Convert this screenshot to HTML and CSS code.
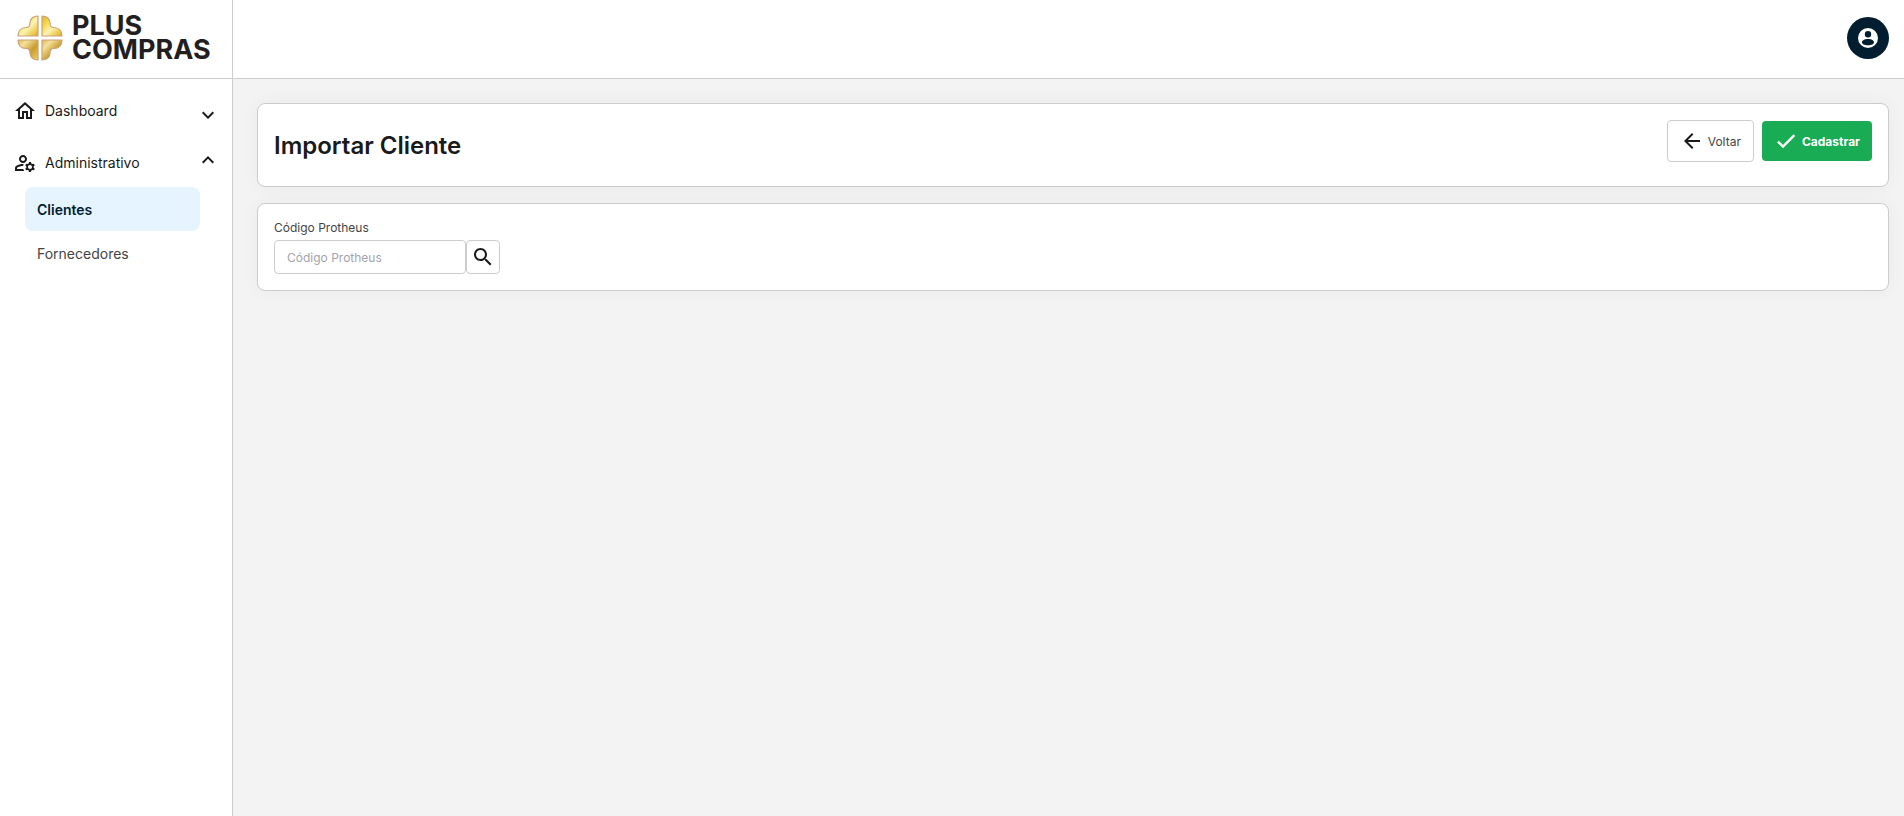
FILE: index.html
```html
<!DOCTYPE html>
<html lang="pt-BR">
<head>
  <meta charset="UTF-8">
  <meta name="viewport" content="width=device-width, initial-scale=1">
  <title>Importar Cliente</title>
  <link rel="stylesheet" href="styles.css">
</head>
<body>
  <div class="layout">
    <aside class="sidebar">
      <a class="logo" href="#">
        <svg class="logo-mark" viewBox="0 0 46 46" aria-hidden="true">
          <defs>
            <linearGradient id="gold" x1="0" y1="0" x2="1" y2="1">
              <stop offset="0" stop-color="#e3b52c" />
              <stop offset="0.3" stop-color="#f5d94f" />
              <stop offset="0.55" stop-color="#fdf3b4" />
              <stop offset="0.8" stop-color="#efcd55" />
              <stop offset="1" stop-color="#d3a637" />
            </linearGradient>
            <linearGradient id="gold-dark" x1="0" y1="0" x2="1" y2="1">
              <stop offset="0" stop-color="#dfba4e" />
              <stop offset="0.25" stop-color="#f3e09a" />
              <stop offset="0.6" stop-color="#c99c2e" />
              <stop offset="1" stop-color="#ecd06a" />
            </linearGradient>
          </defs>
          <g stroke="#c9a27a" stroke-width="1.2" stroke-linejoin="round">
            <path fill="url(#gold)" d="M21 1V21H1C1 16 4 12.500 9 12.500C12 12.500 13 11 13 8C13 4 16 1 21 1Z" />
            <path fill="url(#gold)" d="M25 1V21H45C45 16 42 12.500 37 12.500C34 12.500 33 11 33 8C33 4 30 1 25 1Z" />
            <path fill="url(#gold-dark)" d="M21 45V25H1C1 30 4 33.500 9 33.500C12 33.500 13 35 13 38C13 42 16 45 21 45Z" />
            <path fill="url(#gold-dark)" d="M25 45V25H45C45 30 42 33.500 37 33.500C34 33.500 33 35 33 38C33 42 30 45 25 45Z" />
          </g>
        </svg>
        <span class="logo-text">PLUS<br>COMPRAS</span>
      </a>

      <nav class="menu">
        <button class="menu-item" type="button" aria-expanded="false">
          <svg class="icon" viewBox="0 0 24 24" aria-hidden="true"><path d="M12 5.69l5 4.5V18h-2v-6H9v6H7v-7.81l5-4.5M12 3L2 12h3v8h6v-6h2v6h6v-8h3L12 3z" /></svg>
          <span class="menu-label">Dashboard</span>
          <svg class="icon chevron-down" viewBox="0 0 24 24" aria-hidden="true"><path d="M7.410 8.590L12 13.170l4.590-4.580L18 10l-6 6-6-6z" /></svg>
        </button>
        <button class="menu-item" type="button" aria-expanded="true">
          <svg class="icon" viewBox="0 0 24 24" aria-hidden="true"><path d="M4 18v-.65c0-.34.16-.66.41-.81C6.1 15.53 8.030 15 10 15c.03 0 .05 0 .08.01.1-.7.3-1.370.59-1.980-.22-.02-.44-.03-.67-.03-2.420 0-4.680.67-6.610 1.820-.88.52-1.390 1.500-1.390 2.530V20h9.260c-.42-.6-.75-1.280-.97-2H4zM10 12c2.210 0 4-1.790 4-4s-1.790-4-4-4-4 1.790-4 4 1.790 4 4 4zm0-6c1.100 0 2 .9 2 2s-.9 2-2 2-2-.9-2-2 .9-2 2-2zM20.750 16c0-.22-.03-.42-.06-.63l1.140-1.010-1-1.730-1.450.49c-.32-.27-.68-.48-1.080-.63L18 11h-2l-.3 1.490c-.4.15-.76.36-1.080.63l-1.450-.49-1 1.730 1.140 1.010c-.03.21-.06.41-.06.63s.03.42.06.63l-1.140 1.010 1 1.730 1.450-.49c.32.27.68.48 1.080.63L16 21h2l.3-1.490c.4-.15.76-.36 1.080-.63l1.450.49 1-1.730-1.140-1.010c.03-.21.06-.41.06-.63zM17 18c-1.100 0-2-.9-2-2s.9-2 2-2 2 .9 2 2-.9 2-2 2z" /></svg>
          <span class="menu-label">Administrativo</span>
          <svg class="icon chevron-up" viewBox="0 0 24 24" aria-hidden="true"><path d="M12 8l-6 6 1.410 1.410L12 10.830l4.590 4.580L18 14z" /></svg>
        </button>
        <div class="submenu">
          <a class="submenu-item active" href="#">Clientes</a>
          <a class="submenu-item" href="#">Fornecedores</a>
        </div>
      </nav>
    </aside>

    <div class="page">
      <header class="topbar">
        <button class="avatar" type="button" aria-label="Conta">
          <svg class="icon" viewBox="0 0 24 24" aria-hidden="true"><path fill-rule="evenodd" d="M12 2a10 10 0 1 0 0 20 10 10 0 1 0 0-20zM12 5a3.200 3.200 0 1 1 0 6.400A3.200 3.200 0 1 1 12 5zM12 13c3.600 0 6 1.500 6 3.200S15.600 19.200 12 19.200 6 17.900 6 16.200 8.400 13 12 13z" /></svg>
        </button>
      </header>

      <main class="content">
        <section class="card card-header">
          <h1>Importar Cliente</h1>
          <div class="actions">
            <button class="button button-back" type="button">
              <svg class="icon" viewBox="0 0 24 24" aria-hidden="true"><path d="M20 11H7.830l5.590-5.590L12 4l-8 8 8 8 1.410-1.410L7.830 13H20v-2z" /></svg>
              Voltar
            </button>
            <button class="button button-save" type="submit" form="import-form">
              <svg class="icon" viewBox="0 0 24 24" aria-hidden="true"><path d="M9 16.170L4.830 12l-1.420 1.410L9 19 21 7l-1.410-1.410z" /></svg>
              Cadastrar
            </button>
          </div>
        </section>

        <form class="card" id="import-form">
          <label for="codigo">Código Protheus</label>
          <div class="search-group">
            <input type="text" id="codigo" placeholder="Código Protheus">
            <button class="search-button" type="button" aria-label="Buscar">
              <svg class="icon" viewBox="0 0 24 24" aria-hidden="true"><path d="M15.500 14h-.79l-.28-.27C15.410 12.590 16 11.110 16 9.500 16 5.910 13.090 3 9.500 3S3 5.910 3 9.500 5.910 16 9.500 16c1.610 0 3.090-.59 4.230-1.570l.27.28v.79l5 4.990L20.490 19l-4.990-5zm-6 0C7.010 14 5 11.990 5 9.500S7.010 5 9.500 5 14 7.010 14 9.500 11.990 14 9.500 14z" /></svg>
            </button>
          </div>
        </form>
      </main>
    </div>
  </div>
</body>
</html>
```

FILE: styles.css
```css
* {
  box-sizing: border-box;
}

body {
  margin: 0;
  font-family: Inter, "Liberation Sans", sans-serif;
  font-size: 14px;
  color: #1a1a1a;
  background-color: #f3f3f3;
}

button,
input {
  font-family: inherit;
  color: inherit;
}

button {
  cursor: pointer;
}

a {
  color: inherit;
  text-decoration: none;
}

.icon {
  width: 24px;
  height: 24px;
  flex-shrink: 0;
  fill: currentColor;
}

.layout {
  display: flex;
  min-height: 100vh;
}

/* Sidebar */
.sidebar {
  width: 233px;
  flex-shrink: 0;
  background-color: #fff;
  border-right: 1px solid #ccc;
}

.logo {
  display: flex;
  align-items: center;
  gap: 9px;
  height: 79px;
  padding: 0 17px 2px;
  border-bottom: 1px solid #ccc;
}

.logo-mark {
  width: 46px;
  height: 46px;
  flex-shrink: 0;
}

.logo-text {
  font-size: 27px;
  font-weight: 700;
  line-height: 24px;
  color: #231f20;
}

.menu {
  padding: 6px 11px 6px 12px;
}

.menu-item {
  display: flex;
  align-items: center;
  gap: 8px;
  width: 100%;
  height: 52px;
  padding: 0 1px;
  border: none;
  background: none;
  font-size: 14px;
  text-align: left;
}

.menu-label {
  flex: 1;
  padding-bottom: 2px;
}

.chevron-down {
  margin-top: 8px;
}

.chevron-up {
  margin-bottom: 6px;
}

.submenu {
  margin-top: -2px;
  padding: 0 21px 0 13px;
}

.submenu-item {
  display: flex;
  align-items: center;
  height: 44px;
  padding: 0 12px;
  border-radius: 8px;
  color: #444;
}

.submenu-item.active {
  background-color: #e6f4ff;
  color: #001e2f;
  font-weight: 600;
}

/* Page */
.page {
  flex: 1;
  min-width: 0;
}

.topbar {
  display: flex;
  justify-content: flex-end;
  align-items: center;
  height: 79px;
  padding: 0 15px 2px;
  background-color: #fff;
  border-bottom: 1px solid #ccc;
}

.avatar {
  display: flex;
  align-items: center;
  justify-content: center;
  width: 42px;
  height: 42px;
  padding: 0;
  border: none;
  border-radius: 50%;
  background-color: #001e2f;
  color: #fff;
}

.content {
  display: flex;
  flex-direction: column;
  gap: 16px;
  padding: 24px 15px 24px 24px;
}

.card {
  padding: 16px;
  background-color: #fff;
  border: 1px solid #ccc;
  border-radius: 8px;
  box-shadow: 0 0 20px rgba(0, 0, 0, 0.04);
}

.card-header {
  display: flex;
  justify-content: space-between;
  align-items: flex-start;
  padding-bottom: 24px;
}

h1 {
  margin: 0;
  padding-top: 10px;
  font-size: 24px;
  font-weight: 600;
  line-height: 32px;
}

.actions {
  display: flex;
  align-items: center;
  gap: 8px;
}

.button {
  display: flex;
  align-items: center;
  gap: 4px;
  height: 40px;
  padding: 0 12px;
  border: none;
  border-radius: 4px;
  font-size: 12px;
}

.button-back {
  height: 42px;
  background-color: #fff;
  border: 1px solid #ccc;
  color: #444;
}

.button-back .icon {
  fill: #1a1a1a;
}

.button-save {
  background-color: #1aab55;
  color: #fff;
  font-weight: 700;
}

.button-save .icon {
  stroke: #fff;
  stroke-width: 0.5;
}

label {
  display: block;
  margin-bottom: 4px;
  font-size: 12px;
  line-height: 16px;
  color: #444;
}

.search-group {
  display: flex;
}

input[type="text"] {
  width: 192px;
  height: 34px;
  padding: 0 12px;
  border: 1px solid #ccc;
  border-radius: 4px;
  font-size: 12px;
}

input::placeholder {
  color: #a3a3ad;
}

.search-button {
  display: flex;
  align-items: center;
  justify-content: center;
  width: 34px;
  height: 34px;
  padding: 0;
  border: 1px solid #ccc;
  border-radius: 4px;
  background-color: #fff;
}
```
